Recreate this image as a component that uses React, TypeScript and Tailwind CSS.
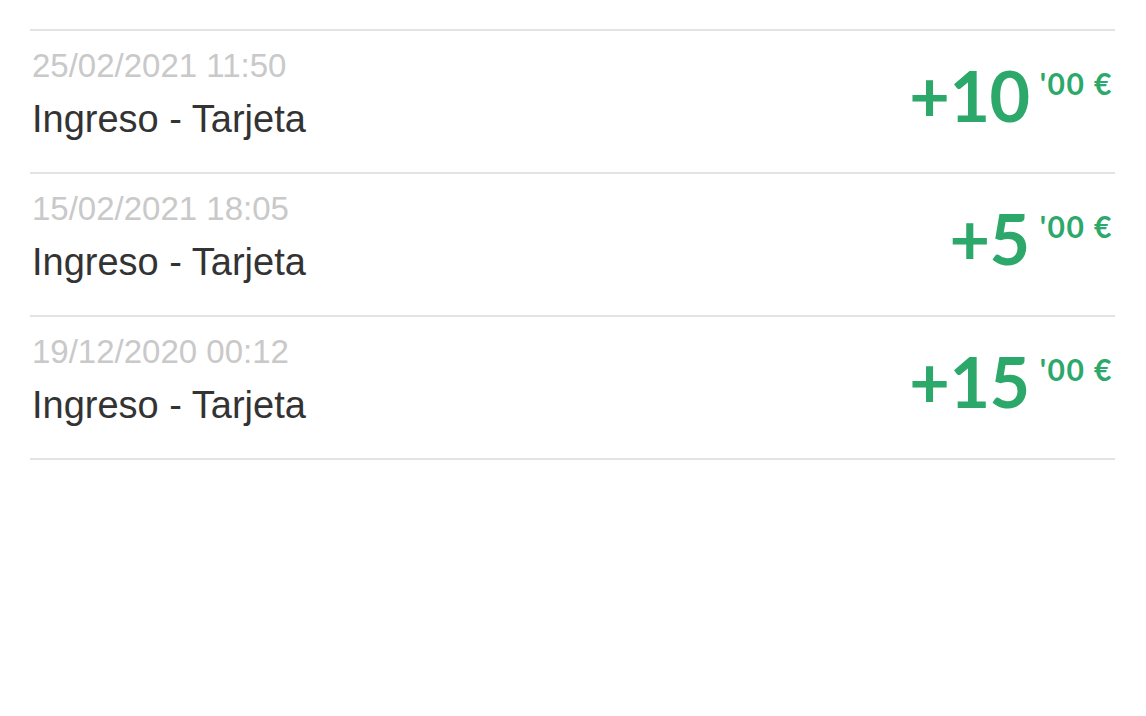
import React from "react";

interface Movement {
  date: string;
  concept: string;
  amount: string;
}

const movements: Movement[] = [
  { date: "25/02/2021 11:50", concept: "Ingreso - Tarjeta", amount: "+10" },
  { date: "15/02/2021 18:05", concept: "Ingreso - Tarjeta", amount: "+5" },
  { date: "19/12/2020 00:12", concept: "Ingreso - Tarjeta", amount: "+15" },
];

const MovementRow: React.FC<Movement> = ({ date, concept, amount }) => {
  return (
    <div className="flex items-start justify-between border-b-2 border-[#e3e3e3] h-[143px]">
      <div className="pl-[2px] pt-[16px] font-['Liberation_Sans',Arial,sans-serif]">
        <p className="text-[33px] leading-[37px] text-[#c9c9c9]">{date}</p>
        <p className="mt-[14px] text-[38px] leading-[42px] text-[#333333]">{concept}</p>
      </div>
      <div className="flex items-start pt-[29px] pr-[2px] font-['Lato',sans-serif] font-bold text-[#2ca86b]">
        <span className="text-[70px] leading-none tracking-[-0.5px]">{amount}</span>
        <span className="ml-[10px] mt-[8px] text-[30px] leading-none tracking-[1.5px]">'00 €</span>
      </div>
    </div>
  );
};

const App: React.FC = () => {
  return (
    <div className="min-h-[716px] w-full bg-white pt-[29px] px-[30px] pr-[31px]">
      <div className="border-t-2 border-[#e3e3e3]">
        {movements.map((m) => (
          <MovementRow key={m.date} {...m} />
        ))}
      </div>
    </div>
  );
};

export default App;
